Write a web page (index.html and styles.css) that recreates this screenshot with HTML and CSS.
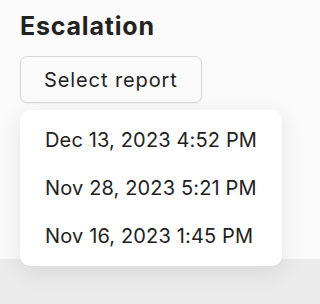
FILE: index.html
```html
<!DOCTYPE html>
<html>
<head>
<meta charset="utf-8">
<link rel="stylesheet" href="styles.css">
</head>
<body>
<div class="panel">
  <h2 class="title">Escalation</h2>
  <div class="picker">
    <button class="select-btn">Select report</button>
    <ul class="menu">
      <li class="menu-item">Dec 13, 2023 4:52 PM</li>
      <li class="menu-item">Nov 28, 2023 5:21 PM</li>
      <li class="menu-item">Nov 16, 2023 1:45 PM</li>
    </ul>
  </div>
</div>
<div class="footer-band"></div>
</body>
</html>
```

FILE: styles.css
```css
html, body {
  margin: 0;
  padding: 0;
  overflow: hidden;
}
body {
  height: 304px;
  background: #ebebeb;
  font-family: "Inter", "Open Sans", sans-serif;
  color: #222;
}
.panel {
  height: 259px;
  background: #fafafa;
  padding: 11px 20px 0;
  box-sizing: border-box;
}
.title {
  margin: 0;
  font-size: 25px;
  font-weight: 700;
  letter-spacing: 0.8px;
  line-height: 30px;
  color: #222;
}
.picker {
  position: relative;
  margin-top: 15px;
}
.select-btn {
  display: block;
  width: 182px;
  height: 47px;
  padding: 0 0 0 23px;
  text-align: left;
  font-family: inherit;
  font-size: 20px;
  letter-spacing: 0.9px;
  color: #222;
  background: #fafafa;
  border: 1px solid #d9d9d9;
  border-radius: 7px;
  box-shadow: 0 1px 2px rgba(0,0,0,0.05);
}
.menu {
  position: absolute;
  left: 0;
  top: 54px;
  width: 262px;
  margin: 0;
  padding: 6px 0;
  list-style: none;
  background: #fff;
  border-radius: 10px;
  box-shadow: 0 6px 24px rgba(0,0,0,0.09);
  box-sizing: border-box;
}
.menu-item {
  height: 48px;
  line-height: 48px;
  padding-left: 25px;
  font-size: 20px;
  letter-spacing: 0.15px;
  color: #222;
}
.footer-band {
  height: 45px;
}
```
